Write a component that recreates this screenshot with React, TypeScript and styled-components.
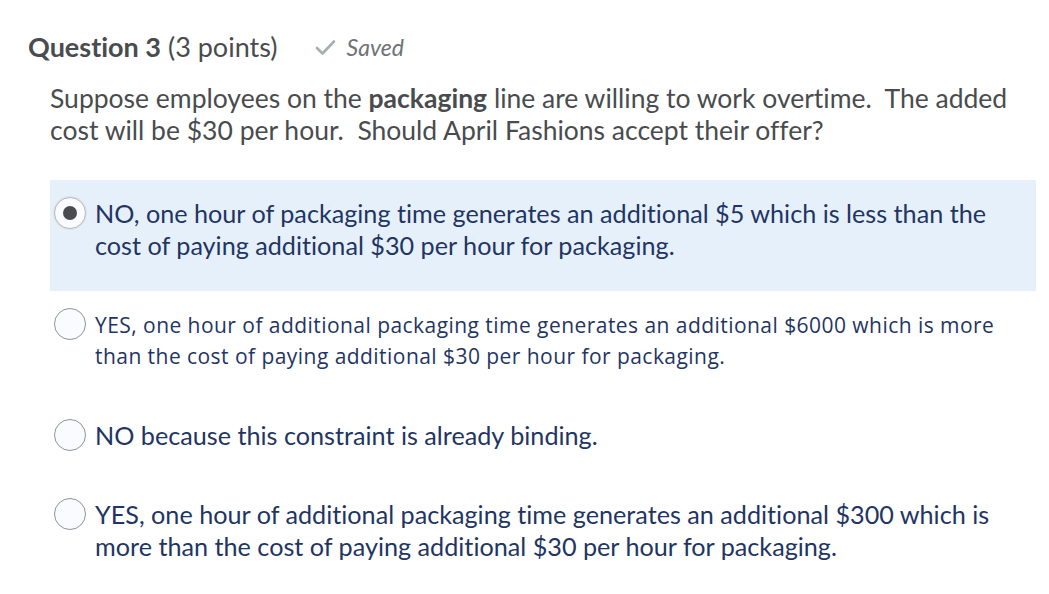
import React from "react";
import styled, { createGlobalStyle } from "styled-components";

const Global = createGlobalStyle`
  html, body { margin: 0; padding: 0; background: #ffffff; }
  body { font-family: Lato, "Open Sans", sans-serif; font-variant-ligatures: none; }
`;

const Page = styled.div`
  width: 1049px;
  height: 594px;
  box-sizing: border-box;
  padding: 32px 0 0 28px;
  overflow: hidden;
`;

const Header = styled.div`
  display: flex;
  align-items: center;
  height: 30px;
  color: #494c4e;
  font-family: Lato, sans-serif;
`;

const Title = styled.h2`
  margin: 0;
  font-size: 27px;
  line-height: 30px;
  font-weight: 400;
  color: #494c4e;
  b { font-weight: 700; }
`;

const SavedTag = styled.span`
  display: inline-flex;
  align-items: center;
  gap: 11px;
  margin-left: 37px;
  font-size: 23px;
  font-style: italic;
  color: #6e7376;
`;

const Question = styled.p`
  margin: 20px 0 0 22px;
  width: 990px;
  font-size: 26.5px;
  line-height: 32px;
  color: #494c4e;
  white-space: pre-wrap;
  font-variant-ligatures: none;
  b { font-weight: 700; }
`;

const Options = styled.div`
  margin: 34px 0 0 22px;
  width: 986px;
  display: flex;
  flex-direction: column;
`;

const OptionRow = styled.label<{ $selected?: boolean }>`
  display: flex;
  align-items: flex-start;
  gap: 9px;
  padding: 17px 20px 30px 4px;
  background: ${(p) => (p.$selected ? "#e6f0fb" : "transparent")};
`;

const Radio = styled.span<{ $checked?: boolean }>`
  flex: none;
  width: 32px;
  height: 32px;
  box-sizing: border-box;
  border-radius: 50%;
  border: 1px solid ${(p) => (p.$checked ? "#b5b9bd" : "#8f9498")};
  background: #f9fbff;
  box-shadow: ${(p) => (p.$checked ? "0 0 0 1px #e0e3e6" : "none")};
  display: flex;
  align-items: center;
  justify-content: center;
  &::after {
    content: "";
    width: 14px;
    height: 14px;
    border-radius: 50%;
    background: #494c4e;
    display: ${(p) => (p.$checked ? "block" : "none")};
  }
`;

const OptionText = styled.span<{ $alt?: boolean }>`
  color: #1f3563;
  font-family: ${(p) => (p.$alt ? '"Open Sans", sans-serif' : "Lato, sans-serif")};
  font-size: ${(p) => (p.$alt ? "21px" : "25.2px")};
  letter-spacing: ${(p) => (p.$alt ? "0.45px" : "0")};
  line-height: ${(p) => (p.$alt ? "31px" : "32px")};
  padding-top: ${(p) => (p.$alt ? "1.5px" : "0")};
  font-variant-ligatures: none;
`;

const Check = () => (
  <svg width="21" height="17" viewBox="0 0 21 17" aria-hidden>
    <path d="M2 9 L7.5 14.5 L19 2.5" fill="none" stroke="#a7aeb4" strokeWidth="2.6" strokeLinecap="round" strokeLinejoin="round" />
  </svg>
);

const options = [
  {
    text: "NO, one hour of packaging time generates an additional $5 which is less than the cost of paying additional $30 per hour for packaging.",
    selected: true,
  },
  {
    text: "YES, one hour of additional packaging time generates an additional $6000 which is more than the cost of paying additional $30 per hour for packaging.",
    alt: true,
  },
  { text: "NO because this constraint is already binding." },
  {
    text: "YES, one hour of additional packaging time generates an additional $300 which is more than the cost of paying additional $30 per hour for packaging.",
  },
];

export default function App() {
  return (
    <>
      <Global />
      <Page>
        <Header>
          <Title>
            <b>Question 3</b> (3 points)
          </Title>
          <SavedTag>
            <Check />
            Saved
          </SavedTag>
        </Header>
        <Question>
          Suppose employees on the <b>packaging</b> line are willing to work overtime.{"  "}The added cost will be $30 per hour.{"  "}Should April Fashions accept their offer?
        </Question>
        <Options>
          {options.map((o, i) => (
            <OptionRow key={i} $selected={o.selected}>
              <Radio $checked={o.selected} />
              <OptionText $alt={o.alt}>{o.text}</OptionText>
            </OptionRow>
          ))}
        </Options>
      </Page>
    </>
  );
}
